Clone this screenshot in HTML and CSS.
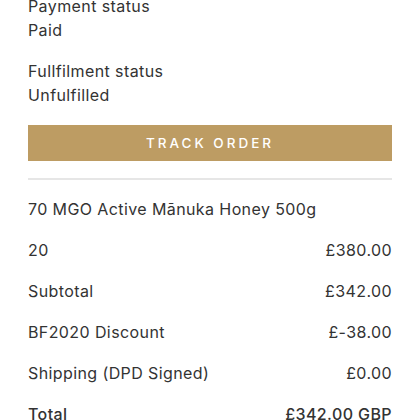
FILE: index.html
```html
<!DOCTYPE html>
<html>
<head>
<meta charset="utf-8">
<link rel="stylesheet" href="styles.css">
</head>
<body>
<div class="page">
  <div class="statuses">
    <div class="status">
      <div class="label">Payment status</div>
      <div class="value">Paid</div>
    </div>
    <div class="status">
      <div class="label">Fullfilment status</div>
      <div class="value">Unfulfilled</div>
    </div>
  </div>
  <button class="track">TRACK ORDER</button>
  <hr class="divider">
  <div class="rows">
    <div class="row"><span>70 MGO Active Mānuka Honey 500g</span></div>
    <div class="row"><span>20</span><span>£380.00</span></div>
    <div class="row"><span>Subtotal</span><span>£342.00</span></div>
    <div class="row"><span>BF2020 Discount</span><span>£-38.00</span></div>
    <div class="row"><span>Shipping (DPD Signed)</span><span>£0.00</span></div>
    <div class="row total"><span>Total</span><span>£342.00 GBP</span></div>
  </div>
</div>
</body>
</html>
```
FILE: styles.css
```css
html, body {
  margin: 0;
  padding: 0;
  background: #ffffff;
  overflow: hidden;
}
.page {
  font-family: "Inter", "Liberation Sans", sans-serif;
  font-size: 16px;
  line-height: 24px;
  letter-spacing: 0.4px;
  color: #333333;
  padding: 0 28px;
  margin-top: -6px;
  display: flex;
  flex-direction: column;
}
.statuses {
  display: flex;
  flex-direction: column;
  gap: 17px;
}
.status {
  display: flex;
  flex-direction: column;
}
.track {
  margin-top: 18px;
  height: 36px;
  border: none;
  background: #bd9c63;
  color: #ffffff;
  font-family: "Inter", "Liberation Sans", sans-serif;
  font-size: 13.5px;
  font-weight: 500;
  letter-spacing: 3px;
  padding: 0;
}
.divider {
  margin: 17px 0 0 0;
  border: none;
  height: 2px;
  background: #e6e6e6;
}
.rows {
  margin-top: 17px;
  display: flex;
  flex-direction: column;
  gap: 17px;
}
.row {
  display: flex;
  justify-content: space-between;
}
.total {
  font-weight: 500;
}
```
